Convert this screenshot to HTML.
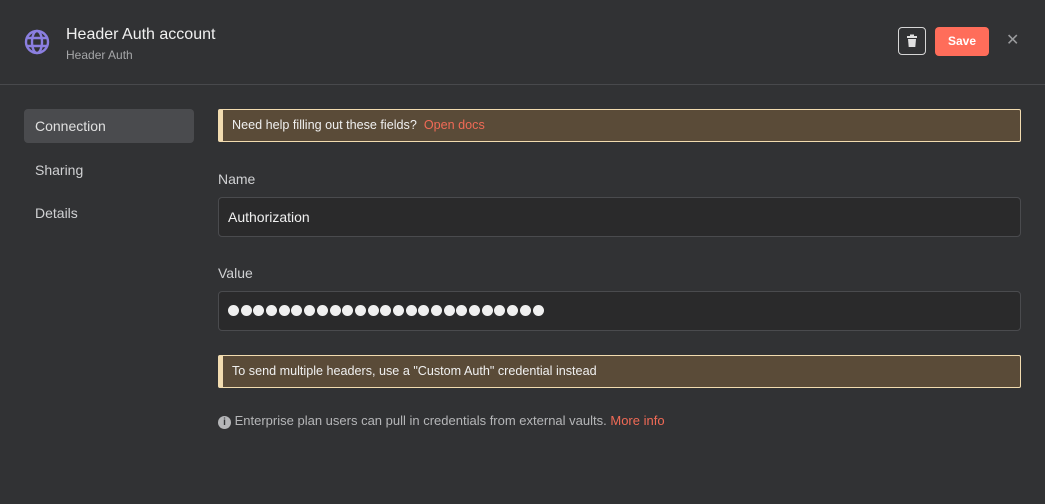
<!DOCTYPE html>
<html><head><style>
body{margin:0;width:1045px;height:504px;background:#313234;font-family:"Liberation Sans",sans-serif;position:relative;overflow:hidden;color:#e8e8e8}
.a{position:absolute}
.hdr{left:0;top:0;width:1045px;height:84px;border-bottom:1px solid #48494c}
.title{left:66px;top:26px;font-size:16px;color:#f0f0f0}
.sub{left:66px;top:48px;font-size:12px;color:#a5a6a8}
.trash{left:898px;top:27px;width:28px;height:28px;border:1px solid #d6d6d6;border-radius:4px;box-sizing:border-box}
.save{left:935px;top:27px;width:54px;height:29px;background:#ff6d5a;border-radius:4px;color:#fff;font-size:12px;font-weight:bold;text-align:center;line-height:29px}
.nav{left:24px;width:170px;height:34px;line-height:34px;padding-left:11px;box-sizing:border-box;font-size:14px;color:#d0d1d3;border-radius:4px}
.call{left:218px;width:803px;height:33px;background:#5a4b38;border:1px solid #f2dcb0;border-left:5px solid #f2dcb0;box-sizing:border-box;font-size:12.6px;color:#f0f0f0;padding-left:9px;line-height:31px;border-radius:2px}
.lbl{left:218px;font-size:14px;color:#d0d1d3}
.inp{left:218px;width:803px;height:40px;background:#2a2a2b;border:1px solid #4a4b4e;border-radius:4px;box-sizing:border-box;font-size:14px;padding-left:9px;line-height:38px;color:#f0f0f0}
.o{color:#f06a56}
.dots{display:flex;gap:1.7px;padding-top:13px}
.dots i{width:11px;height:11px;border-radius:50%;background:#f0f0f0;display:block}
</style></head><body>
<div class="a hdr"></div>
<svg class="a" style="left:24px;top:29px" width="26" height="26" viewBox="0 0 26 26" fill="none" stroke="#8b7fe0" stroke-width="2.4"><circle cx="13" cy="13" r="11"/><ellipse cx="13" cy="13" rx="5" ry="11"/><line x1="2" y1="9" x2="24" y2="9"/><line x1="2" y1="17" x2="24" y2="17"/></svg>
<div class="a title">Header Auth account</div>
<div class="a sub">Header Auth</div>
<div class="a trash"><svg width="26" height="26" viewBox="0 0 26 26"><rect x="8" y="8" width="10" height="2" fill="#e0e0e0"/><rect x="11" y="6.5" width="4" height="2" fill="#e0e0e0"/><path d="M9 11h8l-.7 8h-6.6z" fill="#e0e0e0"/></svg></div>
<div class="a save">Save</div>
<div class="a" style="left:1006px;top:30px;font-size:16px;color:#9a9b9d">✕</div>
<div class="a nav" style="top:109px;background:#4a4b4e;color:#e0e0e0">Connection</div>
<div class="a nav" style="top:153px">Sharing</div>
<div class="a nav" style="top:196px">Details</div>
<div class="a call" style="top:109px">Need help filling out these fields? &nbsp;<span class="o">Open docs</span></div>
<div class="a lbl" style="top:171px">Name</div>
<div class="a inp" style="top:197px">Authorization</div>
<div class="a lbl" style="top:265px">Value</div>
<div class="a inp" style="top:291px"><div class="dots"><i></i><i></i><i></i><i></i><i></i><i></i><i></i><i></i><i></i><i></i><i></i><i></i><i></i><i></i><i></i><i></i><i></i><i></i><i></i><i></i><i></i><i></i><i></i><i></i><i></i></div></div>
<div class="a call" style="top:355px">To send multiple headers, use a "Custom Auth" credential instead</div>
<div class="a" style="left:218px;top:413px;font-size:13px;color:#b5b6b8"><span style="display:inline-block;width:13px;height:13px;border-radius:50%;background:#b5b6b8;color:#313234;font-size:10px;font-weight:bold;text-align:center;line-height:13px;vertical-align:0px">i</span> Enterprise plan users can pull in credentials from external vaults. <span class="o">More info</span></div>
</body></html>
